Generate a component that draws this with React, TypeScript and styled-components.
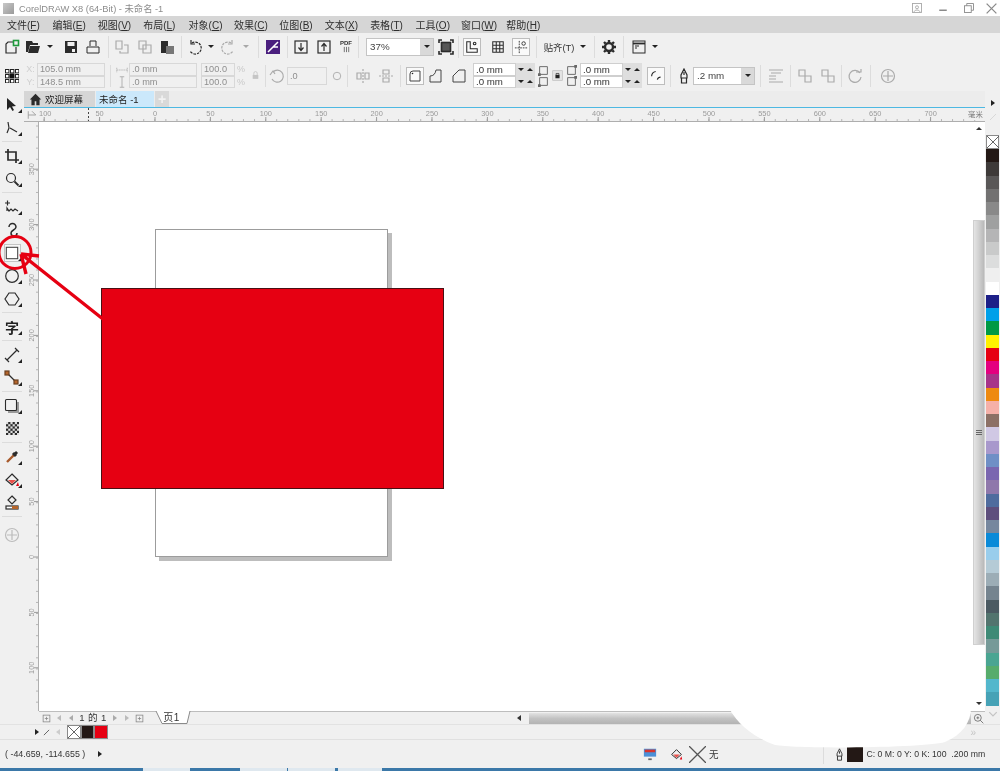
import React from "react";
import styled, { createGlobalStyle } from "styled-components";

const GlobalStyle = createGlobalStyle`
  html, body { margin: 0; padding: 0; background: #fff; }
  body { font-family: "Liberation Sans", "Noto Sans CJK SC", sans-serif; }
`;

const Page = styled.div`
  position: relative;
  width: 1000px;
  height: 771px;
  overflow: hidden;
  display: flex;
  flex-direction: column;
  background: #f0f0f0;
  color: #333;
  filter: blur(0.45px);
`;

const TitleBar = styled.div`
  height: 16px;
  display: flex;
  align-items: center;
  background: #fff;
  font-size: 9.3px;
  color: #8c8c8c;
`;
const TitleLogo = styled.div`
  width: 11px;
  height: 11px;
  margin: 0 5px 0 3px;
  background: linear-gradient(135deg, #c8c8c8, #9a9a9a);
`;
const TitleText = styled.span`
  flex: 1;
`;

const MenuBar = styled.div`
  height: 17px;
  display: flex;
  align-items: center;
  gap: 15.4px;
  padding-left: 7px;
  background: #d6d6d6;
  font-size: 10px;
  color: #2e2e2e;
`;
const MenuItem = styled.span`
  width: 30px;
  white-space: nowrap;
  u { text-decoration: underline; }
`;

const Bar = styled.div<{ $h: number }>`
  height: ${({ $h }) => $h}px;
  display: flex;
  align-items: center;
  background: #f0f0f0;
`;

const Cell = styled.div<{ $w: number; $off?: boolean }>`
  width: ${({ $w }) => $w}px;
  flex: none;
  display: flex;
  flex-direction: column;
  align-items: center;
  justify-content: center;
  opacity: ${({ $off }) => ($off ? 0.35 : 1)};
`;

const Sep = styled.div<{ $h?: number }>`
  width: 1px;
  height: ${({ $h }) => $h ?? 22}px;
  flex: none;
  background: #dcdcdc;
`;

const Caret = styled.div<{ $dir?: "down" | "up" | "right" | "left"; $c?: string }>`
  width: 0;
  height: 0;
  border-style: solid;
  border-color: transparent;
  ${({ $dir, $c }) => {
    const c = $c ?? "#222";
    if ($dir === "right") return `border-width: 3px 0 3px 4px; border-left-color: ${c};`;
    if ($dir === "left") return `border-width: 3px 4px 3px 0; border-right-color: ${c};`;
    if ($dir === "up") return `border-width: 0 3px 3px 3px; border-bottom-color: ${c};`;
    return `border-width: 3px 3px 0 3px; border-top-color: ${c};`;
  }}
`;

const ComboBox = styled.div<{ $w: number }>`
  width: ${({ $w }) => $w}px;
  height: 18px;
  flex: none;
  display: flex;
  box-sizing: border-box;
  border: 1px solid #c4c4c4;
  background: #fff;
  font-size: 9.8px;
  color: #444;
`;
const ComboText = styled.div`
  flex: 1;
  padding-left: 3px;
  line-height: 16px;
`;
const ComboBtn = styled.div`
  width: 13px;
  display: flex;
  align-items: center;
  justify-content: center;
  background: #d9d9d9;
`;

const Toggle = styled.div<{ $on?: boolean }>`
  width: 18px;
  height: 18px;
  display: flex;
  align-items: center;
  justify-content: center;
  box-sizing: border-box;
  border: 1px solid ${({ $on }) => ($on ? "#bdbdbd" : "transparent")};
  background: ${({ $on }) => ($on ? "#fafafa" : "transparent")};
`;

const SnapLabel = styled.span`
  font-size: 9.4px;
  color: #333;
  white-space: nowrap;
`;
const PdfLabel = styled.span`
  font-size: 6px;
  line-height: 6px;
  font-weight: 700;
  color: #333;
`;

const Stack = styled.div`
  width: 100%;
  display: flex;
  flex-direction: column;
`;

const Field = styled.div<{ $off?: boolean; $h?: number }>`
  height: ${({ $h }) => $h ?? 12.5}px;
  display: flex;
  align-items: center;
  box-sizing: border-box;
  border: 1px solid #d8d8d8;
  padding-left: 2px;
  font-size: 9.2px;
  color: ${({ $off }) => ($off ? "#8e8e8e" : "#333")};
  background: ${({ $off }) => ($off ? "#f0f0f0" : "#fff")};
`;

const SpinField = styled.div`
  display: flex;
  height: 12.5px;
`;
const SpinValue = styled(Field)`
  flex: 1;
  background: #fff;
  border-color: #cfcfcf;
  font-size: 9.7px;
`;
const SpinBtns = styled.div`
  width: 19px;
  display: flex;
  align-items: center;
  justify-content: space-around;
  background: #dedede;
`;

const AxisLabel = styled.span`
  font-size: 9px;
  line-height: 12.5px;
  color: #cfcfcf;
`;
const Percent = styled.span`
  font-size: 9px;
  line-height: 12.5px;
  color: #c8c8c8;
`;

const Workspace = styled.div`
  height: 633px;
  display: flex;
`;

const Toolbox = styled.div`
  width: 24px;
  flex: none;
  padding-top: 2px;
  display: flex;
  flex-direction: column;
  align-items: center;
  background: #f0f0f0;
`;
const ToolCell = styled.div`
  position: relative;
  width: 24px;
  height: 23px;
  flex: none;
  display: flex;
  align-items: center;
  justify-content: center;
`;
const ToolMark = styled.div`
  position: absolute;
  right: 2px;
  bottom: 3px;
  width: 0;
  height: 0;
  border-style: solid;
  border-width: 0 0 4px 4px;
  border-color: transparent transparent #222 transparent;
`;
const ToolSep = styled.div<{ $after?: number }>`
  width: 20px;
  height: 1px;
  flex: none;
  margin: 2px 0 ${({ $after }) => $after ?? 2}px;
  background: #dcdcdc;
`;
const TextTool = styled.span`
  font-size: 14px;
  font-weight: 700;
  color: #222;
`;
const ActiveTool = styled.div`
  width: 17px;
  height: 18px;
  display: flex;
  align-items: center;
  justify-content: center;
  box-sizing: border-box;
  border: 1px solid #c4c4c4;
  background: #f7f7f7;
`;

const Main = styled.div`
  width: 961px;
  flex: none;
  display: flex;
  flex-direction: column;
`;

const TabRow = styled.div`
  height: 17px;
  flex: none;
  display: flex;
  box-sizing: border-box;
  background: #ececec;
  border-bottom: 1px solid #4db8e2;
  font-size: 9.5px;
`;
const Tab = styled.div<{ $active?: boolean; $w: number }>`
  width: ${({ $w }) => $w}px;
  margin-right: 1px;
  display: flex;
  align-items: center;
  gap: 3px;
  padding-left: ${({ $active }) => ($active ? 3 : 5)}px;
  box-sizing: border-box;
  background: ${({ $active }) => ($active ? "#cbe8fb" : "#d6d6d6")};
  color: #222;
`;
const TabPlus = styled.div`
  width: 14px;
  display: flex;
  align-items: center;
  justify-content: center;
  background: #d9d9d9;
  color: #f2f2f2;
  font-size: 14px;
  font-weight: 700;
`;

const RulerRow = styled.div`
  height: 14px;
  flex: none;
  display: flex;
  box-sizing: border-box;
  background: #f0f0f0;
  border-bottom: 1px solid #aeaeae;
`;
const RulerCorner = styled.div`
  width: 15px;
  flex: none;
  display: flex;
  align-items: center;
  justify-content: center;
`;

const Body = styled.div`
  flex: 1;
  display: flex;
  min-height: 0;
`;
const VRuler = styled.div`
  width: 15px;
  flex: none;
  background: #f0f0f0;
  border-right: 1px solid #aeaeae;
  box-sizing: border-box;
`;
const Canvas = styled.div`
  position: relative;
  flex: 1;
  background: #fff;
`;
const Sheet = styled.div`
  position: absolute;
  left: 116px;
  top: 107px;
  width: 233px;
  height: 328px;
  box-sizing: border-box;
  background: #fff;
  border: 1px solid #9c9c9c;
  box-shadow: 4px 4px 0 #bdbdbd;
`;
const RedRect = styled.div`
  position: absolute;
  left: 62px;
  top: 166px;
  width: 343px;
  height: 201px;
  box-sizing: border-box;
  background: #e60012;
  border: 1px solid #4a1014;
`;

const ScrollCol = styled.div`
  width: 13px;
  flex: none;
  display: flex;
  flex-direction: column;
  align-items: center;
  padding-top: 5px;
  background: #fff;
  box-sizing: border-box;
`;
const ScrollThumb = styled.div`
  width: 12px;
  height: 425px;
  margin: 90px 0 57px;
  box-sizing: border-box;
  background: linear-gradient(90deg, #e4e4e4, #d2d2d2 45%, #b9b9b9);
  border: 1px solid #d0d0d0;
  display: flex;
  flex-direction: column;
  align-items: center;
  justify-content: center;
  gap: 1px;
`;
const Grip = styled.div`
  width: 6px;
  height: 1px;
  background: #666;
`;

const PageBar = styled.div`
  height: 13px;
  flex: none;
  display: flex;
  align-items: center;
  padding-left: 15px;
  box-sizing: border-box;
`;
const PageBarInner = styled.div`
  flex: 1;
  height: 13px;
  display: flex;
  align-items: center;
  border-top: 1px solid #bdbdbd;
  box-sizing: border-box;
  font-size: 9.6px;
  color: #333;
`;
const PageCount = styled.span`
  width: 32px;
  text-align: center;
  letter-spacing: 0.4px;
  white-space: nowrap;
  line-height: 12px;
`;
const PageTab = styled.div`
  position: relative;
  width: 36px;
  height: 13px;
  margin-top: -1px;
  flex: none;
  display: flex;
  align-items: center;
  justify-content: center;
  font-size: 10px;
  line-height: 12px;
`;
const PageTabShape = styled.svg`
  position: absolute;
  inset: 0;
`;
const PageTabText = styled.span`
  position: relative;
  margin-right: 3px;
  letter-spacing: 0.5px;
`;
const HScroll = styled.div`
  flex: 1;
  height: 11px;
  margin-left: 6px;
  background: linear-gradient(180deg, #e2e2e2, #c2c2c2 50%, #b3b3b3);
`;

const Palette = styled.div`
  width: 15px;
  flex: none;
  display: flex;
  flex-direction: column;
  align-items: center;
  padding-top: 9px;
  box-sizing: border-box;
`;
const PaletteHead = styled.div`
  height: 35px;
  flex: none;
  display: flex;
  flex-direction: column;
  align-items: center;
  gap: 7px;
`;
const Swatch = styled.div<{ $c: string }>`
  width: 13.5px;
  height: 13.25px;
  flex: none;
  background: ${({ $c }) => $c};
`;
const NoFill = styled.div`
  width: 13.5px;
  height: 14px;
  flex: none;
  box-sizing: border-box;
  border: 1px solid #8a8a8a;
  background: #fff;
  line-height: 0;
`;
const PaletteFoot = styled.div`
  margin-top: 3px;
  display: flex;
  flex-direction: column;
  align-items: center;
  gap: 3px;
  font-size: 10px;
  color: #c4c4c4;
`;

const DocRow = styled.div`
  height: 15px;
  display: flex;
  align-items: center;
  padding-left: 34px;
  box-sizing: border-box;
  background: #f0f0f0;
  border-top: 1px solid #e2e2e2;
`;
const DocSwatch = styled.div<{ $c: string }>`
  width: 13.5px;
  height: 14px;
  flex: none;
  line-height: 0;
  box-sizing: border-box;
  border: 1px solid #8a8a8a;
  background: ${({ $c }) => $c};
`;
const DocMore = styled.span`
  margin-left: auto;
  margin-right: 24px;
  font-size: 10px;
  color: #c4c4c4;
`;

const StatusBar = styled.div`
  height: 29px;
  display: flex;
  align-items: center;
  box-sizing: border-box;
  border-top: 1px solid #e0e0e0;
  background: #f0f0f0;
  font-size: 9.5px;
  color: #333;
`;
const Coords = styled.span`
  width: 98px;
  padding-left: 5px;
  box-sizing: border-box;
  white-space: nowrap;
  font-size: 8.9px;
`;
const StatusGap = styled.div<{ $w: number }>`
  width: ${({ $w }) => $w}px;
  flex: none;
`;
const OutlineSwatch = styled.div`
  width: 16px;
  height: 16px;
  flex: none;
  background: #231815;
`;
const StatusText = styled.span`
  white-space: nowrap;
  font-size: 8.7px;
  margin-left: 4px;
`;

const Taskbar = styled.div`
  height: 3px;
  display: flex;
  background: #3b78a8;
`;
const TaskItem = styled.div<{ $w: number; $gap: number }>`
  width: ${({ $w }) => $w}px;
  margin-left: ${({ $gap }) => $gap}px;
  background: #dfe8ef;
`;

const Overlay = styled.svg`
  position: absolute;
  left: 0;
  top: 0;
  pointer-events: none;
`;

type IconProps = { s?: number; children: React.ReactNode; c?: string; w?: number };
const Ic = ({ s = 16, children, c = "#2b2b2b", w = 1.2 }: IconProps) => (
  <svg width={s} height={s} viewBox="0 0 16 16" fill="none" stroke={c} strokeWidth={w}>
    {children}
  </svg>
);

const RectCorner = ({ d, dot }: { d: string; dot?: boolean }) => (
  <Ic s={16} w={1} c="#444">
    <path d={d} />
    {dot && <circle cx="5.5" cy="5.5" r="0.8" fill="#222" stroke="none" />}
  </Ic>
);

const CornerBox = ({ at }: { at: "tr" | "bl" }) => (
  <Ic s={11} w={1.1} c="#444">
    <rect x="2.5" y="2.5" width="11" height="11" />
    {at === "tr" ? (
      <rect x="12" y="0" width="4" height="4" fill="#666" stroke="none" />
    ) : (
      <rect x="0" y="12" width="4" height="4" fill="#666" stroke="none" />
    )}
  </Ic>
);

const OriginIcon = () => {
  const cells = [0, 1, 2].flatMap((r) => [0, 1, 2].map((k) => ({ r, k })));
  return (
    <svg width={14} height={14} viewBox="0 0 14 14">
      {cells.map(({ r, k }) =>
        r === 1 && k === 1 ? (
          <rect key="c" x={4.5} y={4.5} width={5} height={5} fill="#111" />
        ) : (
          <rect
            key={`${r}${k}`}
            x={k * 5 + 0.5}
            y={r * 5 + 0.5}
            width={3.4}
            height={3.4}
            fill="#fff"
            stroke="#222"
            strokeWidth={1}
          />
        )
      )}
    </svg>
  );
};

const HRuler = () => {
  const marks = [-100, -50, 0, 50, 100, 150, 200, 250, 300, 350, 400, 450, 500, 550, 600, 650, 700];
  const minor = Array.from({ length: 86 }, (_, i) => 5 + i * 11.08);
  return (
    <svg width={946} height={13}>
      {minor.map((x) => (
        <line key={x} x1={x} x2={x} y1={11} y2={13} stroke="#b5b5b5" />
      ))}
      {marks.map((m) => {
        const x = 116 + m * 1.108;
        return (
          <g key={m}>
            <line x1={x} x2={x} y1={9} y2={13} stroke="#9a9a9a" />
            <text x={m === -100 ? x + 1 : x} y={8} fontSize={7.4} textAnchor="middle" fill="#9a9a9a">
              {Math.abs(m)}
            </text>
          </g>
        );
      })}
      <line x1={49.5} x2={49.5} y1={0} y2={13} stroke="#444" strokeDasharray="2 2" />
      <rect x={926} y={1} width={20} height={11} fill="#f0f0f0" />
      <text x={929} y={9} fontSize={7.4} fill="#777">
        毫米
      </text>
    </svg>
  );
};

const VRulerMarks = () => {
  const marks = [350, 300, 250, 200, 150, 100, 50, 0, -50, -100];
  const minor = Array.from({ length: 54 }, (_, i) => i * 11.08 + 4);
  return (
    <svg width={14} height={589}>
      {minor.map((y) => (
        <line key={y} x1={12} x2={14} y1={y} y2={y} stroke="#b5b5b5" />
      ))}
      {marks.map((m) => {
        const y = 435 - m * 1.108;
        return (
          <g key={m}>
            <line x1={10} x2={14} y1={y} y2={y} stroke="#9a9a9a" />
            <text
              x={0}
              y={0}
              fontSize={7.4}
              textAnchor="middle"
              fill="#9a9a9a"
              transform={`translate(10 ${y}) rotate(-90)`}
            >
              {Math.abs(m)}
            </text>
          </g>
        );
      })}
    </svg>
  );
};

const swatches = [
  "#231815", "#3e3a39", "#595757", "#727171", "#898989", "#9fa0a0", "#b5b5b6", "#c9caca", "#dcdddd", "#efefef",
  "#ffffff", "#1d2088", "#00a0e9", "#009944", "#fff100", "#e60012", "#e4007f", "#a73489", "#ee8a10", "#f5b0a8",
  "#8c7065", "#d0c8e4", "#a898cc", "#6f8fc6", "#7a66b0", "#8f78ab", "#4f6c9e", "#5e4f7d", "#76879e", "#0a8ad8",
  "#99cdec", "#b5cbd6", "#9cadb6", "#75848f", "#4b5a62", "#52746e", "#3e8a76", "#769a98", "#4aa592", "#57ac6c",
  "#53b7cc", "#46a2b6",
];

const menus: [string, string][] = [
  ["文件", "F"], ["编辑", "E"], ["视图", "V"], ["布局", "L"], ["对象", "C"], ["效果", "C"],
  ["位图", "B"], ["文本", "X"], ["表格", "T"], ["工具", "O"], ["窗口", "W"], ["帮助", "H"],
];

const NoFillMark = ({ size }: { size: number }) => (
  <svg width={size} height={size} viewBox="0 0 12 12" stroke="#555" strokeWidth={0.9}>
    <path d="M0 0L12 12M12 0L0 12" />
  </svg>
);

const Spin = () => (
  <SpinBtns>
    <Caret />
    <Caret $dir="up" />
  </SpinBtns>
);

export default function App() {
  return (
    <Page>
      <GlobalStyle />
      <TitleBar>
        <TitleLogo />
        <TitleText>CorelDRAW X8 (64-Bit) - 未命名 -1</TitleText>
        <Cell $w={16}>
          <Ic s={12} c="#a8a8a8">
            <rect x="2" y="2" width="12" height="12" />
            <circle cx="8" cy="7" r="2" />
            <path d="M4 13c1-3 7-3 8 0" />
          </Ic>
        </Cell>
        <Cell $w={10} />
        <Cell $w={16}>
          <Ic s={12} c="#8a8a8a" w={2}>
            <path d="M3 11H13" />
          </Ic>
        </Cell>
        <Cell $w={10} />
        <Cell $w={16}>
          <Ic s={12} c="#8a8a8a">
            <rect x="2" y="5" width="9" height="9" />
            <path d="M5 5V2H14V11H11" />
          </Ic>
        </Cell>
        <Cell $w={6} />
        <Cell $w={16}>
          <Ic s={13} c="#8a8a8a" w={1.6}>
            <path d="M2 2L14 14M14 2L2 14" />
          </Ic>
        </Cell>
        <Cell $w={1} />
      </TitleBar>

      <MenuBar>
        {menus.map(([t, k], i) => (
          <MenuItem key={i}>
            {t}(<u>{k}</u>)
          </MenuItem>
        ))}
      </MenuBar>

      <Bar $h={27}>
        <Cell $w={2} />
        <Cell $w={20}>
          <Ic>
            <path d="M9 3H4L2 5V14H12V8" />
            <rect x="9.5" y="1.5" width="5" height="5" stroke="#1f9a3c" strokeWidth={1.6} />
          </Ic>
        </Cell>
        <Cell $w={22}>
          <Ic w={0}>
            <path d="M1 2H7L8 4H13V6H5L3 13H1Z" fill="#2b2b2b" />
            <path d="M5 7H15L13 14H3Z" fill="#2b2b2b" />
          </Ic>
        </Cell>
        <Cell $w={12}>
          <Caret />
        </Cell>
        <Cell $w={30}>
          <Ic w={0}>
            <path d="M2 2H14V14H2Z" fill="#2b2b2b" />
            <rect x="4.5" y="3" width="7" height="4" fill="#f0f0f0" />
            <rect x="9" y="10" width="3" height="3" fill="#f0f0f0" />
          </Ic>
        </Cell>
        <Cell $w={14}>
          <Ic w={1}>
            <path d="M5 7V2H11V7M2 14V8H14V14Z" />
          </Ic>
        </Cell>
        <Cell $w={16}>
          <Sep />
        </Cell>
        <Cell $w={12} $off>
          <Ic>
            <path d="M2 2H8V10H2ZM10 6H14V14H6V12" />
          </Ic>
        </Cell>
        <Cell $w={34} $off>
          <Ic>
            <path d="M2 2H9V10H2ZM6 6H14V14H6Z" />
          </Ic>
        </Cell>
        <Cell $w={10}>
          <Ic w={0}>
            <path d="M2 2H9V14H2Z" fill="#2b2b2b" />
            <path d="M7 7H15V15H7Z" fill="#777" />
          </Ic>
        </Cell>
        <Cell $w={18}>
          <Sep />
        </Cell>
        <Cell $w={10}>
          <Ic>
            <path d="M5 4A6 6 0 1 1 3 12" strokeDasharray="2.5 1" />
            <path d="M4 1V5H8" />
          </Ic>
        </Cell>
        <Cell $w={22}>
          <Caret />
        </Cell>
        <Cell $w={12} $off>
          <Ic>
            <path d="M11 4A6 6 0 1 0 13 12" strokeDasharray="2.5 1" />
            <path d="M12 1V5H8" />
          </Ic>
        </Cell>
        <Cell $w={24} $off>
          <Caret />
        </Cell>
        <Sep />
        <Cell $w={28}>
          <Ic w={0}>
            <rect x="1" y="1" width="14" height="14" fill="#4a1f7e" />
            <path d="M3 13L13 3M8 8L13 8" stroke="#fff" strokeWidth={1.5} />
          </Ic>
        </Cell>
        <Sep />
        <Cell $w={26}>
          <Ic>
            <rect x="2" y="2" width="12" height="12" />
            <path d="M8 4V11M5.5 8.5L8 11.5L10.5 8.5" />
          </Ic>
        </Cell>
        <Cell $w={20}>
          <Ic>
            <rect x="2" y="2" width="12" height="12" />
            <path d="M8 12V5M5.5 7.5L8 4.5L10.5 7.5" />
          </Ic>
        </Cell>
        <Cell $w={24}>
          <PdfLabel>PDF</PdfLabel>
          <Ic s={7} w={1.4}>
            <path d="M3 2V14M8 2V14M13 2V14" />
          </Ic>
        </Cell>
        <Sep />
        <Cell $w={7} />
        <ComboBox $w={68}>
          <ComboText>37%</ComboText>
          <ComboBtn>
            <Caret />
          </ComboBtn>
        </ComboBox>
        <Cell $w={24}>
          <Ic w={1.6}>
            <rect x="3.5" y="3.5" width="9" height="9" fill="#555" />
            <path d="M1 4V1H4M12 1H15V4M15 12V15H12M4 15H1V12" />
          </Ic>
        </Cell>
        <Sep />
        <Cell $w={26}>
          <Toggle $on>
            <Ic s={14}>
              <path d="M2 14V2H6V10H14V14Z" />
              <circle cx="11" cy="4" r="1.5" />
            </Ic>
          </Toggle>
        </Cell>
        <Cell $w={26}>
          <Ic s={14}>
            <path d="M2 2H14V14H2ZM2 6H14M2 10H14M6 2V14M10 2V14" />
          </Ic>
        </Cell>
        <Cell $w={20}>
          <Toggle $on>
            <Ic s={14} w={1}>
              <path d="M6 1V15M1 9H15" strokeDasharray="2 1" />
              <circle cx="11" cy="4" r="2" />
            </Ic>
          </Toggle>
        </Cell>
        <Cell $w={10}>
          <Sep />
        </Cell>
        <Cell $w={36}>
          <SnapLabel>贴齐(T)</SnapLabel>
        </Cell>
        <Cell $w={12}>
          <Caret />
        </Cell>
        <Cell $w={10}>
          <Sep />
        </Cell>
        <Cell $w={20}>
          <Ic w={2.4}>
            <circle cx="8" cy="8" r="4" />
            <path d="M8 1V3M8 13V15M1 8H3M13 8H15M3 3L4.5 4.5M11.5 11.5L13 13M13 3L11.5 4.5M4.5 11.5L3 13" />
          </Ic>
        </Cell>
        <Cell $w={8}>
          <Sep />
        </Cell>
        <Cell $w={24}>
          <Ic w={1}>
            <rect x="2" y="2" width="12" height="12" />
            <path d="M2 4.5H14" strokeWidth={1.8} />
            <path d="M4 7H8M4 9H6" />
          </Ic>
        </Cell>
        <Cell $w={8}>
          <Caret />
        </Cell>
      </Bar>

      <Bar $h={31}>
        <Cell $w={24}>
          <OriginIcon />
        </Cell>
        <Cell $w={13}>
          <AxisLabel>X:</AxisLabel>
          <AxisLabel>Y:</AxisLabel>
        </Cell>
        <Cell $w={68}>
          <Stack>
            <Field $off>105.0 mm</Field>
            <Field $off>148.5 mm</Field>
          </Stack>
        </Cell>
        <Cell $w={10}>
          <Sep />
        </Cell>
        <Cell $w={14} $off>
          <Ic s={12}>
            <path d="M1 8H15M1 5V11M15 5V11" strokeDasharray="1.5 1" />
          </Ic>
          <Ic s={12}>
            <path d="M8 1V15M5 1H11M5 15H11" />
          </Ic>
        </Cell>
        <Cell $w={68}>
          <Stack>
            <Field $off>.0 mm</Field>
            <Field $off>.0 mm</Field>
          </Stack>
        </Cell>
        <Cell $w={4} />
        <Cell $w={34}>
          <Stack>
            <Field $off>100.0</Field>
            <Field $off>100.0</Field>
          </Stack>
        </Cell>
        <Cell $w={12}>
          <Percent>%</Percent>
          <Percent>%</Percent>
        </Cell>
        <Cell $w={16} $off>
          <Ic s={9} w={0}>
            <rect x="3" y="7" width="10" height="7" fill="#777" />
            <path d="M5 7V4A3 3 0 0 1 11 4V7" stroke="#777" strokeWidth={1.5} />
          </Ic>
        </Cell>
        <Cell $w={4}>
          <Sep />
        </Cell>
        <Cell $w={20} $off>
          <Ic>
            <path d="M4 4A6 6 0 1 1 3 11" />
            <path d="M1 7L4 3L6 6" />
          </Ic>
        </Cell>
        <Cell $w={40}>
          <Stack>
            <Field $off $h={18}>
              .0
            </Field>
          </Stack>
        </Cell>
        <Cell $w={20} $off>
          <Ic s={12}>
            <circle cx="8" cy="8" r="5" />
          </Ic>
        </Cell>
        <Sep />
        <Cell $w={1} />
        <Cell $w={28} $off>
          <Ic>
            <path d="M8 1V15" strokeDasharray="2 1" />
            <path d="M2 5H6V11H2ZM10 5H14V11H10Z" />
          </Ic>
        </Cell>
        <Cell $w={18} $off>
          <Ic>
            <path d="M1 8H15" strokeDasharray="2 1" />
            <path d="M5 2H11V6H5ZM5 10H11V14H5Z" />
          </Ic>
        </Cell>
        <Cell $w={10}>
          <Sep />
        </Cell>
        <Cell $w={20}>
          <Toggle $on>
            <RectCorner dot d="M6 3H13V13H3V6Q3 3 6 3Z" />
          </Toggle>
        </Cell>
        <Cell $w={22}>
          <RectCorner d="M8 2H13V14H2V8Q7 8 8 2Z" />
        </Cell>
        <Cell $w={24}>
          <RectCorner d="M8 2H14V14H2V8Z" />
        </Cell>
        <Cell $w={2} />
        <Cell $w={62}>
          <Stack>
            <SpinField>
              <SpinValue>.0 mm</SpinValue>
              <Spin />
            </SpinField>
            <SpinField>
              <SpinValue>.0 mm</SpinValue>
              <Spin />
            </SpinField>
          </Stack>
        </Cell>
        <Cell $w={16}>
          <CornerBox at="bl" />
          <CornerBox at="bl" />
        </Cell>
        <Cell $w={12}>
          <Ic s={11} w={0}>
            <rect x="1" y="1" width="14" height="14" fill="#e4e4e4" stroke="#bbb" strokeWidth={1} />
            <rect x="5" y="7" width="6" height="5" fill="#222" />
            <path d="M6 7V5H10V7" stroke="#222" strokeWidth={1} />
          </Ic>
        </Cell>
        <Cell $w={17}>
          <CornerBox at="tr" />
          <CornerBox at="tr" />
        </Cell>
        <Cell $w={62}>
          <Stack>
            <SpinField>
              <SpinValue>.0 mm</SpinValue>
              <Spin />
            </SpinField>
            <SpinField>
              <SpinValue>.0 mm</SpinValue>
              <Spin />
            </SpinField>
          </Stack>
        </Cell>
        <Cell $w={5} />
        <Cell $w={18}>
          <Toggle $on>
            <Ic s={13} w={1.4}>
              <path d="M2 9Q2 4 7 3M9 13Q10 10 13 10" />
            </Ic>
          </Toggle>
        </Cell>
        <Cell $w={10}>
          <Sep />
        </Cell>
        <Cell $w={18}>
          <Ic w={1.2}>
            <path d="M8 1L11 7V10H5V7ZM5.5 10V15H10.5V10M8 4V7" />
          </Ic>
        </Cell>
        <Cell $w={62}>
          <ComboBox $w={62}>
            <ComboText>.2 mm</ComboText>
            <ComboBtn>
              <Caret />
            </ComboBtn>
          </ComboBox>
        </Cell>
        <Cell $w={10}>
          <Sep />
        </Cell>
        <Cell $w={22} $off>
          <Ic>
            <path d="M1 2H15M3 5H13M1 8H8M1 11H8M1 14H15" />
          </Ic>
        </Cell>
        <Cell $w={6}>
          <Sep />
        </Cell>
        <Cell $w={24} $off>
          <Ic>
            <path d="M2 2H8V8H2ZM8 8H14V14H8Z" />
          </Ic>
        </Cell>
        <Cell $w={22} $off>
          <Ic>
            <path d="M2 2H8V8H2ZM8 8H14V14H8Z" />
          </Ic>
        </Cell>
        <Cell $w={4}>
          <Sep />
        </Cell>
        <Cell $w={24} $off>
          <Ic>
            <path d="M13 5A6 6 0 1 0 14 9" />
            <path d="M9 4H14V1" />
          </Ic>
        </Cell>
        <Cell $w={6}>
          <Sep />
        </Cell>
        <Cell $w={30} $off>
          <Ic>
            <circle cx="8" cy="8" r="6.5" />
            <path d="M8 3V13M3 8H13" />
          </Ic>
        </Cell>
      </Bar>

      <Workspace>
        <Toolbox>
          <ToolCell>
            <Ic w={0}>
              <path d="M3 1L3 13L6 10L8.5 14L10 13L8 9.5L12 9Z" fill="#222" />
            </Ic>
            <ToolMark />
          </ToolCell>
          <ToolCell>
            <Ic>
              <path d="M4 2L5 8L3 13M6 8L13 12" />
            </Ic>
            <ToolMark />
          </ToolCell>
          <ToolSep />
          <ToolCell>
            <Ic w={1.7}>
              <path d="M4 1V12H15M1 4H12V15" />
            </Ic>
            <ToolMark />
          </ToolCell>
          <ToolCell>
            <Ic>
              <circle cx="7" cy="7" r="4.5" />
              <path d="M10.5 10.5L14.5 14.5" strokeWidth={1.8} />
            </Ic>
            <ToolMark />
          </ToolCell>
          <ToolSep />
          <ToolCell>
            <Ic>
              <path d="M1 4H6M3.5 1.5V6.5M3 12V9L5 12L7 10L9 12L11 10L14 12" />
            </Ic>
            <ToolMark />
          </ToolCell>
          <ToolCell>
            <Ic w={1.5}>
              <path d="M5 5A3.5 3.5 0 0 1 12 5C12 8 7 8 7 11A3 3 0 0 0 13 11" />
            </Ic>
          </ToolCell>
          <ToolCell>
            <ActiveTool>
              <Ic s={14} w={1.2} c="#444">
                <rect x="1.5" y="1.5" width="13" height="13" fill="#fff" />
              </Ic>
            </ActiveTool>
            <ToolMark />
          </ToolCell>
          <ToolCell>
            <Ic>
              <circle cx="8" cy="8" r="6.3" />
            </Ic>
            <ToolMark />
          </ToolCell>
          <ToolCell>
            <Ic>
              <path d="M5 2H11L15 8L11 14H5L1 8Z" />
            </Ic>
            <ToolMark />
          </ToolCell>
          <ToolSep />
          <ToolCell>
            <TextTool>字</TextTool>
            <ToolMark />
          </ToolCell>
          <ToolSep />
          <ToolCell>
            <Ic>
              <path d="M3 13L13 3M1 11L5 15M11 1L15 5" />
            </Ic>
            <ToolMark />
          </ToolCell>
          <ToolCell>
            <Ic>
              <path d="M3 3L13 13" />
              <rect x="1" y="1" width="4" height="4" fill="#b5652b" stroke="#6a4020" />
              <rect x="10" y="10" width="4" height="4" fill="#b5652b" stroke="#6a4020" />
            </Ic>
            <ToolMark />
          </ToolCell>
          <ToolSep />
          <ToolCell>
            <Ic w={1.1}>
              <rect x="4" y="4" width="11" height="11" fill="#9a9a9a" stroke="none" />
              <rect x="1.5" y="1.5" width="11" height="11" rx="1" fill="#f0f0f0" />
            </Ic>
            <ToolMark />
          </ToolCell>
          <ToolCell>
            <svg width={13} height={13} viewBox="0 0 13 13">
              <rect width="13" height="13" fill="#2a2a2a" />
              {[0, 1, 2, 3, 4, 5].map((r) =>
                [0, 1, 2, 3, 4, 5].map((k) =>
                  (r + k) % 2 === 0 ? (
                    <rect key={`${r}-${k}`} x={k * 2.2} y={r * 2.2} width="2.2" height="2.2" fill="#ddd" />
                  ) : null
                )
              )}
            </svg>
          </ToolCell>
          <ToolSep />
          <ToolCell>
            <Ic w={2}>
              <path d="M3 13L10 6" stroke="#a85a2c" strokeWidth={2.4} />
              <path d="M9 4L12 7M11 3L13 5" strokeWidth={3} />
            </Ic>
            <ToolMark />
          </ToolCell>
          <ToolCell>
            <Ic>
              <path d="M8 2L14 8L8 13L2 8Z" />
              <path d="M4 8H12L8 12Z" fill="#e8504a" stroke="none" />
              <path d="M14 10L15 14H12Z" fill="#e60012" stroke="none" />
            </Ic>
            <ToolMark />
          </ToolCell>
          <ToolCell>
            <Ic>
              <path d="M8 1L12 5L8 9L4 5Z" />
              <rect x="2" y="11" width="12" height="3" fill="#fff" />
              <rect x="8" y="11" width="6" height="3" fill="#b5652b" stroke="none" />
            </Ic>
          </ToolCell>
          <ToolSep $after={6} />
          <ToolCell>
            <Ic c="#bcbcbc">
              <circle cx="8" cy="8" r="6.5" />
              <path d="M8 3V13M3 8H13" />
            </Ic>
          </ToolCell>
        </Toolbox>

        <Main>
          <TabRow>
            <Tab $w={71}>
              <Ic s={13} w={0}>
                <path d="M8 1L15 8H13V15H9V10H7V15H3V8H1Z" fill="#2b2b2b" />
              </Ic>
              欢迎屏幕
            </Tab>
            <Tab $w={58} $active>
              未命名 -1
            </Tab>
            <TabPlus>+</TabPlus>
          </TabRow>
          <RulerRow>
            <RulerCorner>
              <Ic s={10} c="#999" w={1.4}>
                <path d="M2 2V14M2 8H14M8 2L14 8" />
              </Ic>
            </RulerCorner>
            <HRuler />
          </RulerRow>
          <Body>
            <VRuler>
              <VRulerMarks />
            </VRuler>
            <Canvas>
              <Sheet />
              <RedRect />
            </Canvas>
            <ScrollCol>
              <Caret $dir="up" $c="#333" />
              <ScrollThumb>
                <Grip />
                <Grip />
                <Grip />
              </ScrollThumb>
              <Caret $c="#333" />
            </ScrollCol>
          </Body>
          <PageBar>
            <PageBarInner>
              <Cell $w={2} />
              <Cell $w={11}>
                <Ic s={9} c="#888" w={1.4}>
                  <rect x="2" y="2" width="12" height="12" />
                  <path d="M8 5V11M5 8H11" />
                </Ic>
              </Cell>
              <Cell $w={13}>
                <Caret $dir="left" $c="#bbb" />
              </Cell>
              <Cell $w={12}>
                <Caret $dir="left" $c="#aaa" />
              </Cell>
              <PageCount>1 的 1</PageCount>
              <Cell $w={12}>
                <Caret $dir="right" $c="#aaa" />
              </Cell>
              <Cell $w={12}>
                <Caret $dir="right" $c="#bbb" />
              </Cell>
              <Cell $w={13}>
                <Ic s={9} c="#888" w={1.4}>
                  <rect x="2" y="2" width="12" height="12" />
                  <path d="M8 5V11M5 8H11" />
                </Ic>
              </Cell>
              <Cell $w={9} />
              <PageTab>
                <PageTabShape width={36} height={13}>
                  <path d="M1 0L7 12.5H32L35 0" fill="#fff" stroke="#8a8a8a" />
                </PageTabShape>
                <PageTabText>页1</PageTabText>
              </PageTab>
              <Cell $w={324} />
              <Cell $w={8}>
                <Caret $dir="left" $c="#333" />
              </Cell>
              <HScroll />
              <Cell $w={14}>
                <Ic s={11} c="#666">
                  <circle cx="7" cy="7" r="5" />
                  <path d="M10.5 10.5L15 15M5 7H9M7 5V9" />
                </Ic>
              </Cell>
            </PageBarInner>
          </PageBar>
        </Main>

        <Palette>
          <PaletteHead>
            <Caret $dir="right" />
            <Ic s={8} c="#c8c8c8">
              <path d="M2 14L14 2" />
            </Ic>
          </PaletteHead>
          <NoFill>
            <NoFillMark size={12} />
          </NoFill>
          {swatches.map((c, i) => (
            <Swatch key={i} $c={c} />
          ))}
          <PaletteFoot>
            <Ic s={10} c="#c4c4c4" w={2}>
              <path d="M2 5L8 11L14 5" />
            </Ic>
            <span>»</span>
          </PaletteFoot>
        </Palette>
      </Workspace>

      <DocRow>
        <Cell $w={6}>
          <Caret $dir="right" />
        </Cell>
        <Cell $w={12}>
          <Ic s={7} w={1.6}>
            <path d="M2 14L14 2" />
          </Ic>
        </Cell>
        <Cell $w={12}>
          <Caret $dir="left" $c="#ccc" />
        </Cell>
        <Cell $w={3} />
        <DocSwatch $c="#fff">
          <NoFillMark size={12} />
        </DocSwatch>
        <DocSwatch $c="#231815" />
        <DocSwatch $c="#e60012" />
        <DocMore>»</DocMore>
      </DocRow>

      <StatusBar>
        <Coords>( -44.659, -114.655 )</Coords>
        <Caret $dir="right" />
        <StatusGap $w={541} />
        <Ic s={14} w={0}>
          <rect x="1" y="2" width="14" height="9" fill="#4b8fd6" />
          <rect x="2" y="3" width="12" height="3" fill="#d9332c" />
          <path d="M6 13H10V15H6Z" fill="#666" />
        </Ic>
        <StatusGap $w={13} />
        <Ic s={13}>
          <path d="M8 2L14 8L8 13L2 8Z" />
          <path d="M4 8H12L8 12Z" fill="#e8504a" stroke="none" />
          <path d="M14 10L15 14H12Z" fill="#e60012" stroke="none" />
        </Ic>
        <StatusGap $w={6} />
        <NoFillMark size={17} />
        <StatusGap $w={3} />
        <span>无</span>
        <StatusGap $w={104} />
        <Sep $h={20} />
        <StatusGap $w={9} />
        <Ic s={13} w={1.1}>
          <path d="M8 1L11 7V10H5V7ZM5.5 10V15H10.5V10M8 4V7" />
        </Ic>
        <StatusGap $w={1} />
        <OutlineSwatch />
        <StatusText>C: 0 M: 0 Y: 0 K: 100&nbsp; .200 mm</StatusText>
      </StatusBar>

      <Taskbar>
        <TaskItem $w={47} $gap={143} />
        <TaskItem $w={47} $gap={50} />
        <TaskItem $w={47} $gap={1} />
        <TaskItem $w={44} $gap={3} />
      </Taskbar>

      <Overlay width={1000} height={771}>
        <path d="M729 708H971C971 722 962 735 945 742C925 748 800 749 775 745C755 738 738 725 729 708Z" fill="#fff" />
        <circle cx={15} cy={252.5} r={16} fill="none" stroke="#e60012" strokeWidth={3} />
        <path d="M118 331L21 254M21 254L39 256M21 254L26 274" fill="none" stroke="#e60012" strokeWidth={3.4} />
      </Overlay>
    </Page>
  );
}
